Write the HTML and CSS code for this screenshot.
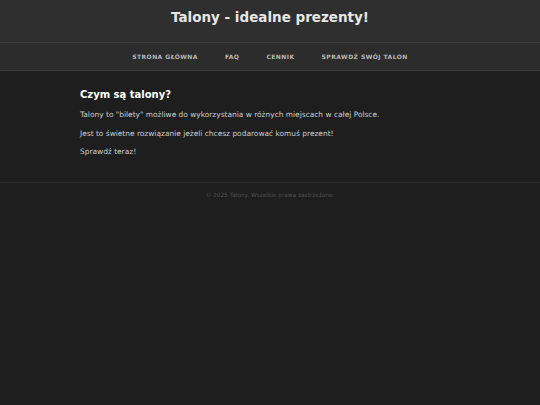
FILE: index.html
```html
<!DOCTYPE html>
<html lang="pl">
<head>
<meta charset="utf-8">
<title>Talony</title>
<link rel="stylesheet" href="styles.css">
</head>
<body>
<header class="site-header">
  <h1 class="site-title">Talony - idealne prezenty!</h1>
</header>
<nav class="site-nav">
  <a href="#">Strona główna</a>
  <a href="#">FAQ</a>
  <a href="#">Cennik</a>
  <a href="#">Sprawdź swój talon</a>
</nav>
<main class="content">
  <h2 class="content-title">Czym są talony?</h2>
  <p>Talony to "bilety" możliwe do wykorzystania w różnych miejscach w całej Polsce.</p>
  <p>Jest to świetne rozwiązanie jeżeli chcesz podarować komuś prezent!</p>
  <p>Sprawdź teraz!</p>
</main>
<footer class="site-footer">© 2025 Talony. Wszelkie prawa zastrzeżone.</footer>
</body>
</html>
```
FILE: styles.css
```css
html, body {
  margin: 0;
  padding: 0;
  background: #1e1e1e;
  font-family: "DejaVu Sans", Verdana, sans-serif;
  color: #d8d8d8;
}
.site-header {
  background: #2f2f2f;
  height: 42px;
  display: flex;
  align-items: center;
  justify-content: center;
  border-bottom: 1px solid #3c3c3c;
}
.site-title {
  margin: 0;
  font-size: 13.5px;
  font-weight: bold;
  color: #e6e6e6;
  transform: translateY(-4px);
}
.site-nav {
  background: #2c2c2c;
  height: 27px;
  display: flex;
  align-items: center;
  justify-content: center;
  gap: 27px;
  border-bottom: 1px solid #3c3c3c;
}
.site-nav a {
  color: #b8b8b8;
  text-decoration: none;
  text-transform: uppercase;
  font-size: 6px;
  font-weight: bold;
  letter-spacing: 0.45px;
}
.content {
  width: 380px;
  margin: 0 auto;
  padding: 18px 0 16px;
}
.content-title {
  margin: 0 0 10px;
  font-size: 10px;
  font-weight: bold;
  color: #ffffff;
}
.content p {
  margin: 0 0 9.5px;
  font-size: 7.45px;
  line-height: 9px;
  color: #cccccc;
}
.site-footer {
  border-top: 1px solid #2b2b2b;
  padding: 9px 0;
  text-align: center;
  font-size: 5.8px;
  color: #505050;
}
```
